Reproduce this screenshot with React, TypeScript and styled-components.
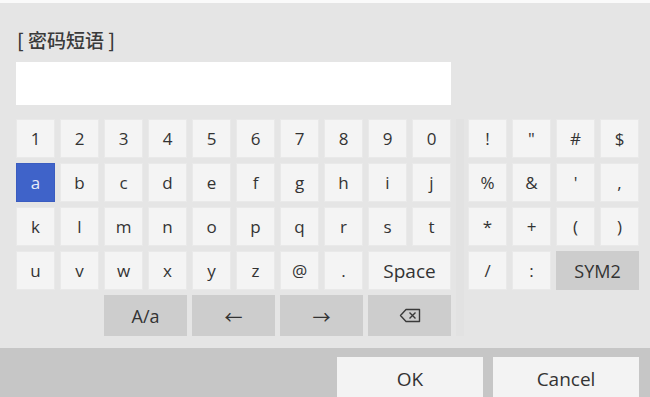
import React from "react";
import styled, { createGlobalStyle } from "styled-components";

const GlobalStyle = createGlobalStyle`
  html, body {
    margin: 0;
    padding: 0;
    background: #e5e5e5;
  }
  body {
    font-family: "Open Sans", "Noto Sans", "Noto Sans CJK SC", sans-serif;
  }
`;

const digits = ["1", "2", "3", "4", "5", "6", "7", "8", "9", "0"];
const row2 = ["a", "b", "c", "d", "e", "f", "g", "h", "i", "j"];
const row3 = ["k", "l", "m", "n", "o", "p", "q", "r", "s", "t"];
const row4 = ["u", "v", "w", "x", "y", "z", "@", "."];
const symbols = ["!", "\"", "#", "$", "%", "&", "'", ",", "*", "+", "(", ")", "/", ":"];

const BackspaceIcon = () => (
  <svg width="22" height="15" viewBox="0 0 22 15" fill="none">
    <path
      d="M7 1.5 H20.5 V13.5 H7 L1.5 7.5 Z"
      stroke="#3a3a3a"
      strokeWidth="1.4"
      strokeLinejoin="round"
    />
    <path d="M10.5 4.5 L16.5 10.5 M16.5 4.5 L10.5 10.5" stroke="#3a3a3a" strokeWidth="1.4" />
  </svg>
);

export default function App() {
  return (
    <>
      <GlobalStyle />
      <Screen>
        <Main>
          <Title>[ 密码短语 ]</Title>
          <Input />
          <Keyboard>
            <KeyGrid $cols={10}>
              {digits.map((k) => (
                <Key key={k}>{k}</Key>
              ))}
              {row2.map((k) => (
                <Key key={k} $active={k === "a"}>
                  {k}
                </Key>
              ))}
              {row3.map((k) => (
                <Key key={k}>{k}</Key>
              ))}
              {row4.map((k) => (
                <Key key={k}>{k}</Key>
              ))}
              <Key $span={2} $big>
                Space
              </Key>
              <FnKey $start={3}>A/a</FnKey>
              <FnKey>←</FnKey>
              <FnKey>→</FnKey>
              <FnKey>
                <BackspaceIcon />
              </FnKey>
            </KeyGrid>
            <Divider />
            <KeyGrid $cols={4}>
              {symbols.map((k) => (
                <Key key={k}>{k}</Key>
              ))}
              <FnKey $start={3}>SYM2</FnKey>
            </KeyGrid>
          </Keyboard>
        </Main>
        <Footer>
          <FooterButton>OK</FooterButton>
          <FooterButton>Cancel</FooterButton>
        </Footer>
      </Screen>
    </>
  );
}

const Screen = styled.div`
  width: 650px;
  height: 397px;
  display: flex;
  flex-direction: column;
  overflow: hidden;
  border-top: 3px solid #fafafa;
  box-sizing: border-box;
  background: #e5e5e5;
`;

const Main = styled.div`
  flex: 1;
  padding: 25px 0 0 16px;
  display: flex;
  flex-direction: column;
`;

const Title = styled.div`
  height: 23px;
  line-height: 23px;
  font-size: 19px;
  font-weight: 500;
  color: #3a3a3a;
  font-family: "Noto Sans CJK SC", "Open Sans", sans-serif;
  padding-left: 1px;
`;

const Input = styled.div`
  width: 435px;
  height: 43px;
  margin-top: 11px;
  background: #ffffff;
`;

const Keyboard = styled.div`
  display: flex;
  margin-top: 14px;
`;

const Divider = styled.div`
  width: 17px;
  display: flex;
  justify-content: center;
  &::before {
    content: "";
    width: 8px;
    background: #e2e2e2;
  }
`;

const KeyGrid = styled.div<{ $cols: number }>`
  display: grid;
  grid-template-columns: repeat(${(p) => p.$cols}, 39px);
  grid-template-rows: repeat(4, 39px) 41px;
  gap: 5px;
`;

const Key = styled.div<{ $active?: boolean; $span?: number; $big?: boolean }>`
  grid-column: span ${(p) => p.$span || 1};
  display: flex;
  align-items: center;
  justify-content: center;
  background: ${(p) => (p.$active ? "#3f63c9" : "#f4f4f4")};
  color: ${(p) => (p.$active ? "#e8ecf8" : "#333333")};
  box-shadow: inset 0 0 0 1px ${(p) => (p.$active ? "#3a5cc0" : "#e9e9e9")};
  font-size: ${(p) => (p.$big ? "19px" : "17px")};
`;

const FnKey = styled.div<{ $start?: number }>`
  grid-column: ${(p) => (p.$start ? `${p.$start} / span 2` : "span 2")};
  display: flex;
  align-items: center;
  justify-content: center;
  background: #cdcdcd;
  color: #333333;
  font-size: 18px;
`;

const Footer = styled.div`
  height: 49px;
  flex-shrink: 0;
  background: #c6c6c6;
  display: flex;
  justify-content: flex-end;
  align-items: flex-start;
  gap: 10px;
  padding: 9px 11px 0 0;
  box-sizing: border-box;
`;

const FooterButton = styled.div`
  width: 146px;
  height: 44px;
  display: flex;
  align-items: center;
  justify-content: center;
  background: #f3f3f3;
  color: #333333;
  font-size: 19px;
`;
